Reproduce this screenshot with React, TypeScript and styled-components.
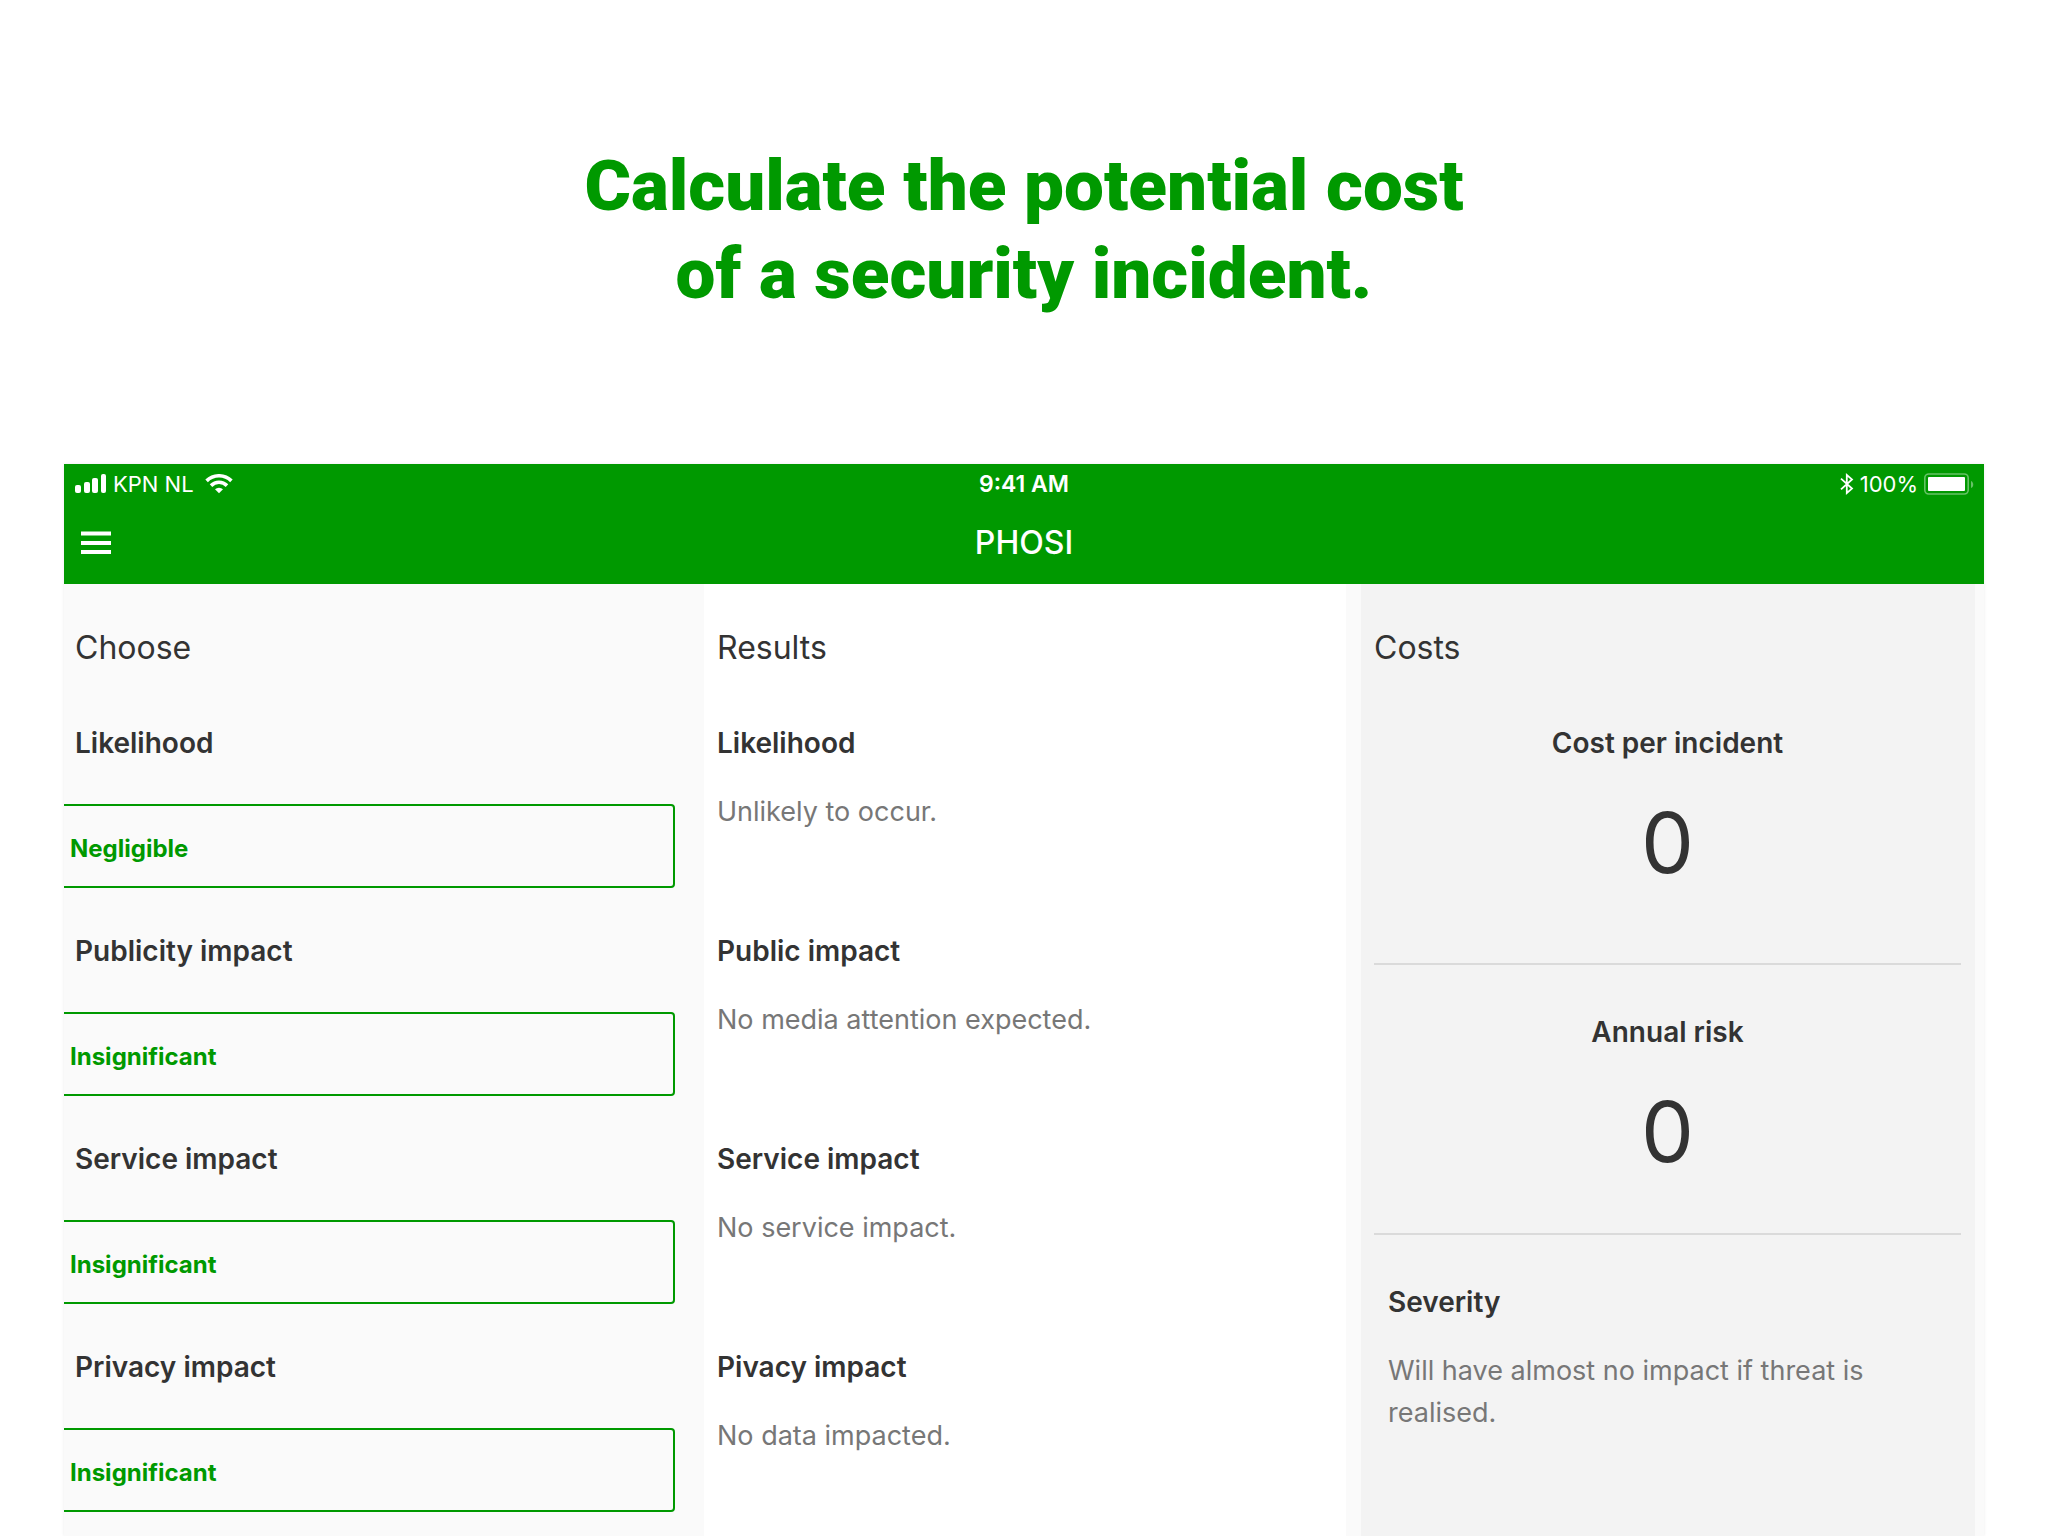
import React, { useId, useState } from "react";
import styled, { createGlobalStyle } from "styled-components";

const green = "#009900";

const GlobalStyle = createGlobalStyle`
  *, *::before, *::after { box-sizing: border-box; }
  body {
    margin: 0;
    background: #ffffff;
    color: #333333;
    font-family: Inter, "Liberation Sans", sans-serif;
  }
  h1, h2, h3, p { margin: 0; }
`;

const Page = styled.main`
  min-height: 100vh;
  display: flex;
  flex-direction: column;
  padding: 0 64px;
`;

const Hero = styled.h1`
  padding: 142px 0 146px;
  color: ${green};
  font-family: Roboto, "Open Sans", sans-serif;
  font-size: 71px;
  font-weight: 900;
  line-height: 88px;
  text-align: center;
`;

const Device = styled.section`
  flex: 1;
  display: flex;
  flex-direction: column;
  overflow: hidden;
  background: #fafafa;
  box-shadow: 0 0 3px rgba(0, 0, 0, 0.08);
`;

const TopBar = styled.header`
  height: 120px;
  background: ${green};
  color: #ffffff;
`;

const BarRow = styled.div<{ $height: number; $inset: number }>`
  display: grid;
  grid-template-columns: 1fr auto 1fr;
  align-items: center;
  height: ${(p) => p.$height}px;
  padding: 0 ${(p) => p.$inset}px;
`;

const StatusGroup = styled.div<{ $end?: boolean }>`
  display: flex;
  align-items: center;
  justify-content: ${(p) => (p.$end ? "flex-end" : "flex-start")};
  gap: 6px;
  font-size: 22px;
  line-height: 28px;
`;

const Carrier = styled.span`
  margin-right: 5px;
`;

const Clock = styled.time`
  font-size: 23px;
  font-weight: 600;
  line-height: 28px;
`;

const AppName = styled.h2`
  font-size: 32px;
  font-weight: 500;
  line-height: 40px;
`;

const MenuButton = styled.button`
  display: flex;
  justify-self: start;
  padding: 0;
  border: 0;
  background: none;
  color: inherit;
  cursor: pointer;
`;

const Columns = styled.div`
  flex: 1;
  display: grid;
  grid-template-columns: repeat(3, minmax(0, 1fr));
  margin: 0 -4px 0 -2px;
`;

const Column = styled.section<{ $background?: string }>`
  padding: 42px 13px 0;
  background: ${(p) => p.$background ?? "transparent"};
`;

const CostColumn = styled(Column)`
  margin: 0 13px 0 15px;
  padding: 42px 14px 0 13px;
`;

const ColumnTitle = styled.h2`
  margin-bottom: 51px;
  font-size: 32px;
  font-weight: 400;
  line-height: 44px;
`;

const Stack = styled.div`
  display: flex;
  flex-direction: column;
  gap: 41px;
`;

const Field = styled.div`
  display: flex;
  flex-direction: column;
  gap: 39px;
`;

const FieldLabel = styled.label`
  font-size: 28px;
  font-weight: 600;
  line-height: 44px;
`;

const Choice = styled.select`
  appearance: none;
  height: 84px;
  margin: 0 16px 0 -19px;
  padding: 4px 12px 0;
  border: 2px solid ${green};
  border-radius: 4px;
  background: transparent;
  color: ${green};
  font: 700 24px Inter, "Liberation Sans", sans-serif;
`;

const Item = styled.article<{ $inset?: boolean }>`
  min-height: 167px;
  padding-left: ${(p) => (p.$inset ? 14 : 0)}px;
`;

const ItemTitle = styled.h3`
  margin-bottom: 26px;
  font-size: 28px;
  font-weight: 600;
  line-height: 44px;
`;

const ItemText = styled.p`
  color: #777777;
  font-size: 27px;
  line-height: 42px;
`;

const Metric = styled.article<{ $space: number }>`
  margin-bottom: 45px;
  padding-bottom: ${(p) => p.$space}px;
  border-bottom: 2px solid #dadada;
  text-align: center;
`;

const Amount = styled.p`
  font-size: 84px;
  line-height: 104px;
`;

const SignalIcon = () => (
  <svg width="33" height="20" viewBox="0 0 33 20" fill="currentColor" aria-hidden="true">
    <rect x="1" y="11" width="6" height="8" rx="2" />
    <rect x="10" y="8" width="6" height="11" rx="2" />
    <rect x="18" y="4" width="6" height="15" rx="2" />
    <rect x="27" y="0" width="5" height="19" rx="2" />
  </svg>
);

const WifiIcon = () => (
  <svg width="28" height="20" viewBox="0 0 28 20" fill="none" stroke="currentColor" strokeWidth="3.6" aria-hidden="true">
    <path d="M1.6 6.9a17.6 17.6 0 0 1 24.8 0" />
    <path d="M6 11.6a11.4 11.4 0 0 1 16 0" />
    <path d="M14 19.2 10 15.3a5.8 5.8 0 0 1 8 0Z" fill="currentColor" stroke="none" />
  </svg>
);

const BluetoothIcon = () => (
  <svg width="14" height="22" viewBox="0 0 14 22" fill="none" stroke="currentColor" strokeWidth="1.8" aria-hidden="true">
    <path d="M1 5.6 12 15.6 6.8 20V2L12 6.4 1 16.4" />
  </svg>
);

const BatteryIcon = () => (
  <svg width="50" height="22" viewBox="0 0 50 22" fill="none" aria-hidden="true">
    <rect x="0.8" y="1" width="43.4" height="20" rx="4" stroke="#ffffff" strokeOpacity="0.4" strokeWidth="1.6" />
    <rect x="4" y="4" width="37" height="14" rx="1" fill="#ffffff" />
    <path d="M47 8c3 1 3 6 0 7Z" fill="#ffffff" fillOpacity="0.4" />
  </svg>
);

const MenuIcon = () => (
  <svg width="30" height="24" viewBox="0 0 30 24" fill="currentColor" aria-hidden="true">
    <rect y="0.5" width="30" height="4" />
    <rect y="10" width="30" height="4" />
    <rect y="19" width="30" height="4" />
  </svg>
);

const impactLevels = ["Insignificant", "Minor", "Moderate", "Major"];

const choices = [
  { label: "Likelihood", options: ["Negligible", "Low", "Medium", "High"] },
  { label: "Publicity impact", options: impactLevels },
  { label: "Service impact", options: impactLevels },
  { label: "Privacy impact", options: impactLevels },
];

const results = [
  { title: "Likelihood", text: "Unlikely to occur." },
  { title: "Public impact", text: "No media attention expected." },
  { title: "Service impact", text: "No service impact." },
  { title: "Pivacy impact", text: "No data impacted." },
];

function ChoiceField({ label, options }: { label: string; options: string[] }) {
  const id = useId();
  const [value, setValue] = useState(options[0]);
  return (
    <Field>
      <FieldLabel htmlFor={id}>{label}</FieldLabel>
      <Choice id={id} value={value} onChange={(e) => setValue(e.target.value)}>
        {options.map((o) => (
          <option key={o}>{o}</option>
        ))}
      </Choice>
    </Field>
  );
}

export default function App() {
  return (
    <Page>
      <GlobalStyle />
      <Hero>
        Calculate the potential cost
        <br />
        of a security incident.
      </Hero>
      <Device>
        <TopBar>
          <BarRow $height={40} $inset={10}>
            <StatusGroup>
              <SignalIcon />
              <Carrier>KPN NL</Carrier>
              <WifiIcon />
            </StatusGroup>
            <Clock>9:41 AM</Clock>
            <StatusGroup $end>
              <BluetoothIcon />
              <span>100%</span>
              <BatteryIcon />
            </StatusGroup>
          </BarRow>
          <BarRow $height={78} $inset={17}>
            <MenuButton aria-label="Menu">
              <MenuIcon />
            </MenuButton>
            <AppName>PHOSI</AppName>
          </BarRow>
        </TopBar>
        <Columns>
          <Column>
            <ColumnTitle>Choose</ColumnTitle>
            <Stack>
              {choices.map((c) => (
                <ChoiceField key={c.label} {...c} />
              ))}
            </Stack>
          </Column>
          <Column $background="#ffffff">
            <ColumnTitle>Results</ColumnTitle>
            <Stack>
              {results.map((r) => (
                <Item key={r.title}>
                  <ItemTitle>{r.title}</ItemTitle>
                  <ItemText>{r.text}</ItemText>
                </Item>
              ))}
            </Stack>
          </Column>
          <CostColumn $background="#f3f3f3">
            <ColumnTitle>Costs</ColumnTitle>
            <Metric $space={68}>
              <ItemTitle>Cost per incident</ItemTitle>
              <Amount>0</Amount>
            </Metric>
            <Metric $space={49}>
              <ItemTitle>Annual risk</ItemTitle>
              <Amount>0</Amount>
            </Metric>
            <Item $inset>
              <ItemTitle>Severity</ItemTitle>
              <ItemText>Will have almost no impact if threat is realised.</ItemText>
            </Item>
          </CostColumn>
        </Columns>
      </Device>
    </Page>
  );
}
